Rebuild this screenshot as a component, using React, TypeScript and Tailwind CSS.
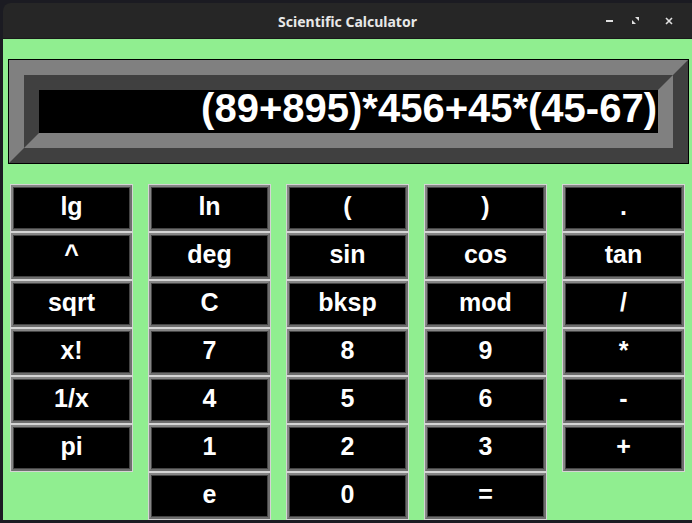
import React from "react";

const rows: string[][] = [
  ["lg", "ln", "(", ")", "."],
  ["^", "deg", "sin", "cos", "tan"],
  ["sqrt", "C", "bksp", "mod", "/"],
  ["x!", "7", "8", "9", "*"],
  ["1/x", "4", "5", "6", "-"],
  ["pi", "1", "2", "3", "+"],
  ["", "e", "0", "=", ""],
];

function Key({ label }: { label: string }) {
  if (!label) return <div className="w-[123px] h-[48px]" />;
  return (
    <div className="w-[123px] h-[48px] border border-[#d4d4d4] bg-[#808080]">
      <div className="w-full h-full border-[2px] border-t-[#858585] border-l-[#858585] border-b-[#6e6e6e] border-r-[#6e6e6e]">
        <div className="w-full h-full border border-[#454545] bg-black flex items-center justify-center">
          <span className="mb-[3px] text-white font-bold text-[25px] leading-none font-[Liberation_Sans,Arial,sans-serif]">
            {label}
          </span>
        </div>
      </div>
    </div>
  );
}

export default function App() {
  return (
    <div className="w-[692px] h-[523px] bg-[#1b1b22] overflow-hidden pt-[3px] pl-[3px]">
      <div className="w-[700px] h-[517px] flex flex-col rounded-tl-[8px] rounded-tr-[8px] overflow-hidden">
        <div className="h-[36px] bg-[#262626] border-b border-[#1a1a1a] flex items-center relative shrink-0">
          <div className="absolute left-0 w-[689px] top-0 h-full flex items-center justify-center text-[#e8e8e8] font-bold text-[14px] font-[Noto_Sans,sans-serif] pt-[1px]">
            Scientific Calculator
          </div>
          <div className="absolute top-0 h-full left-[598px] flex items-center">
            <div className="w-[17px] h-full flex items-center justify-center">
              <div className="w-[7px] h-[2px] bg-[#e0e0e0]" />
            </div>
            <div className="w-[34px] h-full flex items-center justify-center">
              <svg width="7" height="7" viewBox="0 0 7 7">
                <path d="M3 0 H7 V4 Z" fill="#e0e0e0" />
                <path d="M0 3 V7 H4 Z" fill="#e0e0e0" />
              </svg>
            </div>
            <div className="w-[34px] h-full flex items-center justify-center">
              <svg width="8" height="8" viewBox="0 0 8 8">
                <path d="M1 1 L7 7 M7 1 L1 7" stroke="#e0e0e0" strokeWidth="1.6" />
              </svg>
            </div>
          </div>
        </div>
        <div className="flex-1 bg-[#90ee90] pl-[5px] pt-[20px]">
          <div className="w-[681px] h-[105px] border border-black">
            <div className="w-full h-full border-[15px] border-t-[#808080] border-l-[#808080] border-b-[#404040] border-r-[#404040]">
              <div className="w-full h-full border-[15px] border-t-[#404040] border-l-[#404040] border-b-[#808080] border-r-[#808080] bg-black flex items-center justify-end pr-[1px] overflow-hidden">
                <span className="mb-[8px] text-white font-bold text-[40px] leading-none whitespace-nowrap font-[Liberation_Sans,Arial,sans-serif]">
                  (89+895)*456+45*(45-67)
                </span>
              </div>
            </div>
          </div>
          <div className="mt-[20px] ml-[2px] grid grid-cols-[repeat(5,123px)] gap-x-[15px]">
            {rows.flat().map((l, i) => (
              <Key key={i} label={l} />
            ))}
          </div>
        </div>
      </div>
    </div>
  );
}
